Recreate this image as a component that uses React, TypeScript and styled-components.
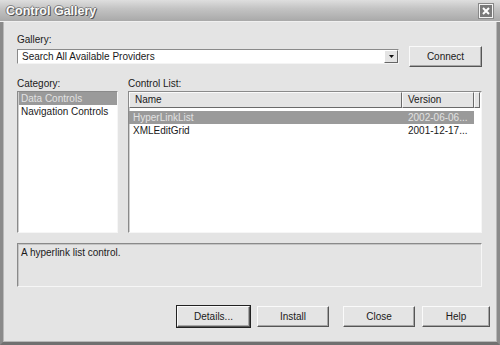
import React from "react";
import styled, { createGlobalStyle } from "styled-components";

const Global = createGlobalStyle`
  html, body { margin: 0; padding: 0; background: #e4e4e4; }
  * { box-sizing: border-box; }
  body { font-family: "Liberation Sans", Arial, sans-serif; font-size: 10px; color: #1a1a1a; }
`;

const Window = styled.div`
  width: 500px;
  height: 345px;
  display: flex;
  flex-direction: column;
  background: #e4e4e4;
`;

const TitleBar = styled.div`
  height: 22px;
  flex: none;
  display: flex;
  align-items: center;
  justify-content: space-between;
  padding: 0 7px 0 6px;
  background: linear-gradient(#dedede 0%, #c4c4c4 40%, #a9a9a9 100%);
  border-bottom: 1px solid #f0f0f0;
`;

const Title = styled.div`
  font-family: "Liberation Sans", Arial, sans-serif;
  font-weight: bold;
  font-size: 12.5px;
  color: #fafafa;
  text-shadow: 1px 1px 0 #555, -1px 0 0 #777, 0 -1px 0 #888, 1px 0 0 #777;
`;

const CloseBtn = styled.div`
  width: 14px;
  height: 14px;
  background: #7a7a7a;
  border: 1px solid #f4f4f4;
  box-shadow: 0 0 0 1px #888;
  display: flex;
  align-items: center;
  justify-content: center;
`;

const Frame = styled.div`
  flex: 1;
  display: flex;
  flex-direction: column;
  border-left: 3px solid #8a8a8a;
  border-right: 3px solid #8a8a8a;
  border-bottom: 3px solid #707070;
  box-shadow: inset 1px 0 0 #b8b8b8, inset -1px 0 0 #b8b8b8, inset 0 -1px 0 #b8b8b8;
  padding: 11px 15px 0 14px;
`;

const Label = styled.div`
  height: 13px;
  line-height: 13px;
`;

const ComboRow = styled.div`
  display: flex;
  align-items: center;
  height: 21px;
  gap: 10px;
`;

const Combo = styled.div`
  flex: 1;
  height: 15px;
  background: #fff;
  border-top: 1px solid #8a8a8a;
  border-left: 1px solid #8a8a8a;
  border-bottom: 1px solid #f4f4f4;
  border-right: 1px solid #f4f4f4;
  display: flex;
  align-items: center;
  padding-left: 4px;
  line-height: 13px;
`;

const ComboText = styled.div`
  flex: 1;
`;

const ArrowBtn = styled.div`
  width: 14px;
  height: 13px;
  background: #e4e4e4;
  border-top: 1px solid #fff;
  border-left: 1px solid #fff;
  border-right: 1px solid #666;
  border-bottom: 1px solid #666;
  display: flex;
  align-items: center;
  justify-content: center;
`;

const Button = styled.div<{ $w: number; $default?: boolean }>`
  width: ${(p) => p.$w}px;
  height: 21px;
  flex: none;
  background: #e4e4e4;
  display: flex;
  align-items: center;
  justify-content: center;
  border-top: 1px solid #fafafa;
  border-left: 1px solid #fafafa;
  border-right: 1px solid #555;
  border-bottom: 1px solid #555;
  box-shadow: inset -1px -1px 0 #a6a6a6;
  outline: ${(p) => (p.$default ? "1px solid #222" : "none")};
`;

const LabelsRow = styled.div`
  display: flex;
  margin-top: 10px;
  gap: 10px;
`;

const LeftCol = styled.div`
  width: 101px;
  flex: none;
`;

const RightCol = styled.div`
  flex: 1;
`;

const ListsRow = styled.div`
  display: flex;
  gap: 10px;
  margin-top: 1px;
  height: 142px;
`;

const Sunken = styled.div`
  background: #fff;
  border-top: 1px solid #8a8a8a;
  border-left: 1px solid #8a8a8a;
  border-bottom: 1px solid #f6f6f6;
  border-right: 1px solid #f6f6f6;
  box-shadow: inset 1px 1px 0 #cfcfcf;
`;

const CategoryList = styled(Sunken)`
  width: 101px;
  flex: none;
  padding: 0 0 0 1px;
`;

const ListItem = styled.div<{ $sel?: boolean }>`
  height: 13px;
  line-height: 13px;
  padding-left: 2px;
  white-space: nowrap;
  background: ${(p) => (p.$sel ? "#9a9a9a" : "transparent")};
  color: ${(p) => (p.$sel ? "#e2e2e2" : "#1a1a1a")};
`;

const ControlList = styled(Sunken)`
  flex: 1;
  padding: 0 1px 0 0;
`;

const Header = styled.div`
  display: flex;
  height: 16px;
`;

const HeaderCell = styled.div<{ $w?: number; $pad: number }>`
  ${(p) => (p.$w ? `width: ${p.$w}px; flex: none;` : "flex: 1;")}
  height: 16px;
  line-height: 14px;
  padding-left: ${(p) => p.$pad}px;
  background: #e4e4e4;
  border-top: 1px solid #fafafa;
  border-left: 1px solid #fafafa;
  border-right: 1px solid #6a6a6a;
  border-bottom: 1px solid #6a6a6a;
  white-space: nowrap;
`;

const Rows = styled.div`
  padding-top: 3px;
`;

const Row = styled.div<{ $sel?: boolean }>`
  display: flex;
  width: 345px;
  height: 13px;
  line-height: 13px;
  background: ${(p) => (p.$sel ? "#9a9a9a" : "transparent")};
  color: ${(p) => (p.$sel ? "#e2e2e2" : "#1a1a1a")};
`;

const Cell = styled.div<{ $w?: number; $pad: number }>`
  ${(p) => (p.$w ? `width: ${p.$w}px; flex: none;` : "flex: 1;")}
  padding-left: ${(p) => p.$pad}px;
  white-space: nowrap;
`;

const Description = styled.div`
  margin-top: 10px;
  height: 44px;
  background: #e4e4e4;
  border-top: 1px solid #8a8a8a;
  border-left: 1px solid #8a8a8a;
  border-bottom: 1px solid #f6f6f6;
  border-right: 1px solid #f6f6f6;
  box-shadow: inset 1px 1px 0 #c4c4c4;
  padding: 2px 3px;
  line-height: 13px;
`;

const ButtonRow = styled.div`
  display: flex;
  margin-top: 19px;
  padding-left: 160px;
  gap: 7px;
`;

const ButtonGap = styled.div`
  width: 1px;
`;

export default function App() {
  return (
    <>
      <Global />
      <Window>
        <TitleBar>
          <Title>Control Gallery</Title>
          <CloseBtn>
            <svg width="8" height="8" viewBox="0 0 8 8">
              <path d="M1 1 L7 7 M7 1 L1 7" stroke="#fff" strokeWidth="2" />
            </svg>
          </CloseBtn>
        </TitleBar>
        <Frame>
          <Label>Gallery:</Label>
          <ComboRow>
            <Combo>
              <ComboText>Search All Available Providers</ComboText>
              <ArrowBtn>
                <svg width="5" height="3" viewBox="0 0 5 3">
                  <path d="M0 0 H5 L2.5 3 Z" fill="#111" />
                </svg>
              </ArrowBtn>
            </Combo>
            <Button $w={73}>Connect</Button>
          </ComboRow>
          <LabelsRow>
            <LeftCol>
              <Label>Category:</Label>
            </LeftCol>
            <RightCol>
              <Label>Control List:</Label>
            </RightCol>
          </LabelsRow>
          <ListsRow>
            <CategoryList>
              <ListItem $sel>Data Controls</ListItem>
              <ListItem>Navigation Controls</ListItem>
            </CategoryList>
            <ControlList>
              <Header>
                <HeaderCell $w={273} $pad={5}>Name</HeaderCell>
                <HeaderCell $w={72} $pad={5}>Version</HeaderCell>
                <HeaderCell $pad={0} />
              </Header>
              <Rows>
                <Row $sel>
                  <Cell $w={273} $pad={4}>HyperLinkList</Cell>
                  <Cell $pad={6}>2002-06-06...</Cell>
                </Row>
                <Row>
                  <Cell $w={273} $pad={4}>XMLEditGrid</Cell>
                  <Cell $pad={6}>2001-12-17...</Cell>
                </Row>
              </Rows>
            </ControlList>
          </ListsRow>
          <Description>A hyperlink list control.</Description>
          <ButtonRow>
            <Button $w={73} $default>Details...</Button>
            <Button $w={72}>Install</Button>
            <ButtonGap />
            <Button $w={72}>Close</Button>
            <Button $w={68}>Help</Button>
          </ButtonRow>
        </Frame>
      </Window>
    </>
  );
}
